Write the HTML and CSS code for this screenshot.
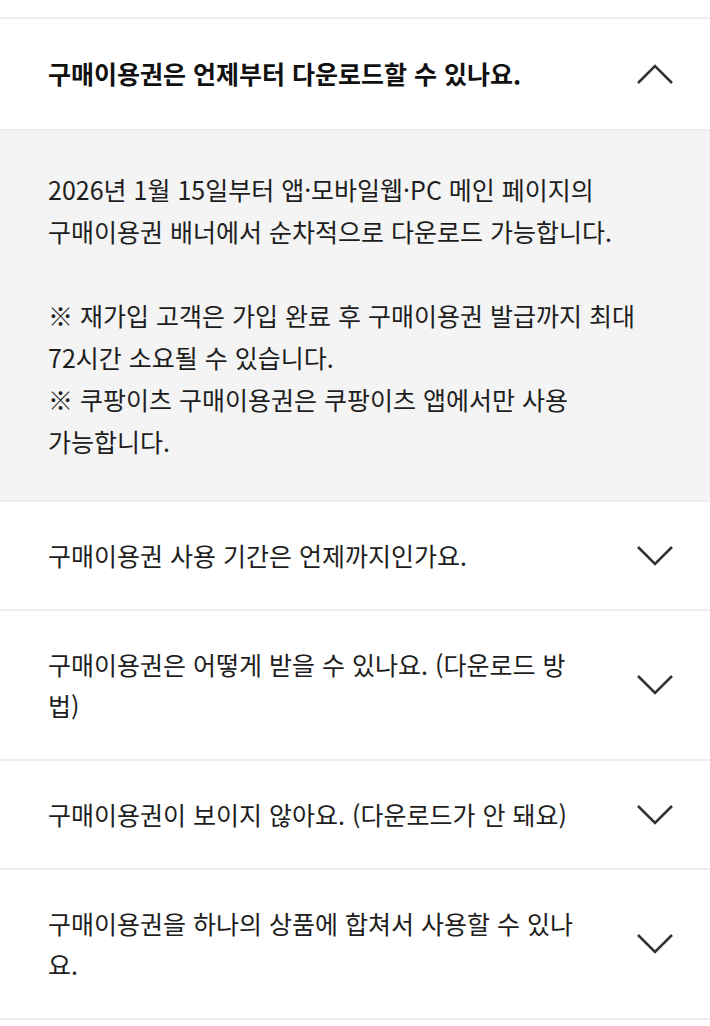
FILE: index.html
```html
<!DOCTYPE html>
<html lang="ko">
<head>
  <meta charset="UTF-8">
  <meta name="viewport" content="width=device-width, initial-scale=1.0">
  <title>구매이용권 FAQ</title>
  <link rel="stylesheet" href="styles.css">
</head>
<body>

<div class="faq-list">
  <div class="faq-item open">
    <div class="faq-question">
      <p class="q-text">구매이용권은 언제부터 다운로드할 수 있나요.</p>
      <svg class="chevron" viewBox="0 0 38 22"><polyline points="2,20 19,3 36,20"/></svg>
    </div>
    <div class="faq-answer">
      <p>2026년 1월 15일부터 앱·모바일웹·PC 메인 페이지의 구매이용권 배너에서 순차적으로 다운로드 가능합니다.</p>
      <p class="blank">&nbsp;</p>
      <p>※ 재가입 고객은 가입 완료 후 구매이용권 발급까지 최대 72시간 소요될 수 있습니다.</p>
      <p>※ 쿠팡이츠 구매이용권은 쿠팡이츠 앱에서만 사용 가능합니다.</p>
    </div>
  </div>

  <div class="faq-item">
    <div class="faq-question">
      <p class="q-text">구매이용권 사용 기간은 언제까지인가요.</p>
      <svg class="chevron" viewBox="0 0 38 22"><polyline points="2,2 19,19 36,2"/></svg>
    </div>
  </div>

  <div class="faq-item">
    <div class="faq-question">
      <p class="q-text">구매이용권은 어떻게 받을 수 있나요. (다운로드 방법)</p>
      <svg class="chevron" viewBox="0 0 38 22"><polyline points="2,2 19,19 36,2"/></svg>
    </div>
  </div>

  <div class="faq-item">
    <div class="faq-question">
      <p class="q-text">구매이용권이 보이지 않아요. (다운로드가 안 돼요)</p>
      <svg class="chevron" viewBox="0 0 38 22"><polyline points="2,2 19,19 36,2"/></svg>
    </div>
  </div>

  <div class="faq-item">
    <div class="faq-question">
      <p class="q-text">구매이용권을 하나의 상품에 합쳐서 사용할 수 있나요.</p>
      <svg class="chevron" viewBox="0 0 38 22"><polyline points="2,2 19,19 36,2"/></svg>
    </div>
  </div>
</div>

</body>
</html>
```

FILE: styles.css
```css
body {
  margin: 0;
  background-color: #fff;
  font-family: 'Noto Sans CJK KR', 'Roboto', sans-serif;
  color: #1e1e1e;
}
p {
  margin: 0;
}
.faq-list {
  padding-top: 17px;
}
.faq-item {
  border-top: 2px solid #eeeeee;
}
.faq-item:last-child {
  border-bottom: 2px solid #eeeeee;
}
.faq-question {
  display: flex;
  align-items: center;
  padding: 33px 36px 33px 48px;
}
.q-text {
  flex: 1;
  font-size: 25px;
  line-height: 41px;
  padding-right: 52px;
}
.open .faq-question {
  padding: 34px 36px 35px 48px;
  border-bottom: 2px solid #eeeeee;
}
.open .q-text {
  font-weight: 700;
  color: #111;
}
.chevron {
  width: 38px;
  height: 22px;
  flex-shrink: 0;
}
.chevron polyline {
  fill: none;
  stroke: #333;
  stroke-width: 2.6;
}
.faq-answer {
  background-color: #f4f4f4;
  padding: 37px 48px 38px 48px;
  font-size: 25px;
  line-height: 42px;
  word-break: keep-all;
}
```
